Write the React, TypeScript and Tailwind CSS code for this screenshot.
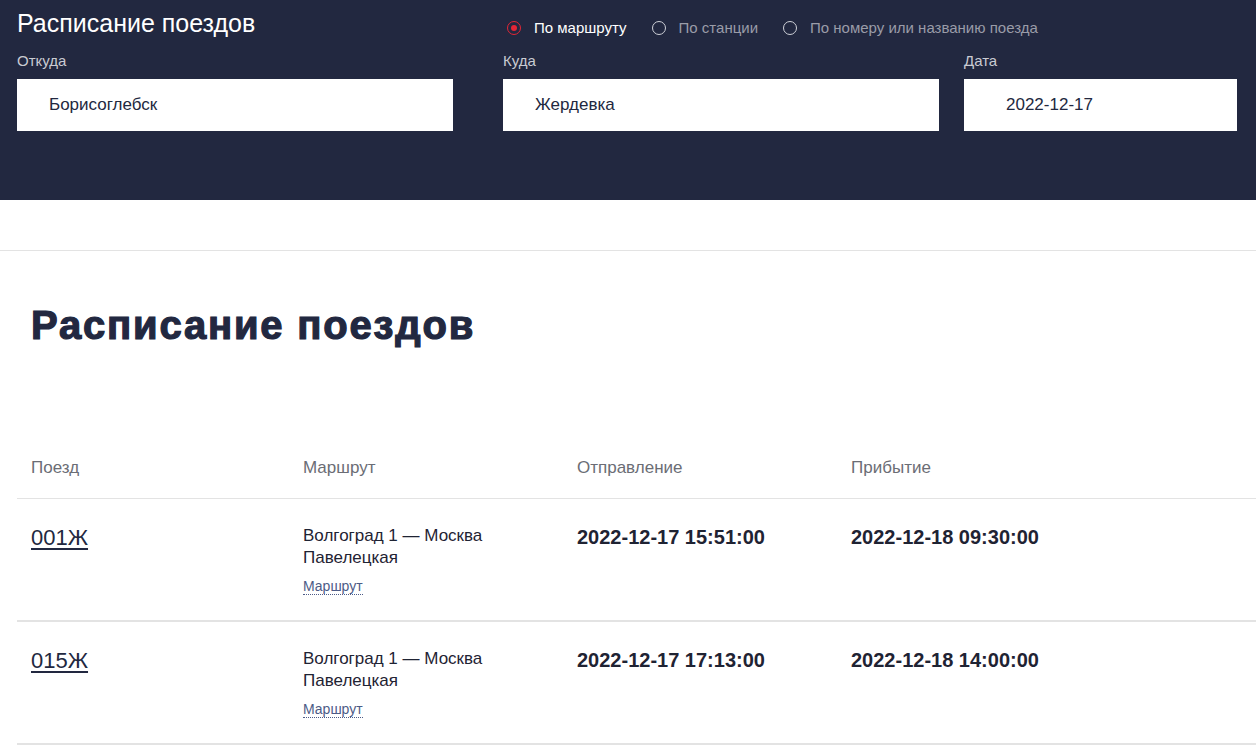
import { useState } from "react";

type Train = {
  number: string;
  route: string;
  departure: string;
  arrival: string;
};

const trains: Train[] = [
  {
    number: "001Ж",
    route: "Волгоград 1 — Москва Павелецкая",
    departure: "2022-12-17 15:51:00",
    arrival: "2022-12-18 09:30:00",
  },
  {
    number: "015Ж",
    route: "Волгоград 1 — Москва Павелецкая",
    departure: "2022-12-17 17:13:00",
    arrival: "2022-12-18 14:00:00",
  },
];

const modes = ["По маршруту", "По станции", "По номеру или названию поезда"];

function Radio({ label, active, onClick }: { label: string; active: boolean; onClick: () => void }) {
  return (
    <button onClick={onClick} className="flex items-center gap-[13px]">
      <span
        className={
          active
            ? "w-[14px] h-[14px] rounded-full border-[1.5px] border-[#e32636] flex items-center justify-center"
            : "w-[14px] h-[14px] rounded-full border-[1.5px] border-[#cfd1d8]"
        }
      >
        {active && <span className="w-[6px] h-[6px] rounded-full bg-[#e32636]" />}
      </span>
      <span className={active ? "text-[15px] text-white" : "text-[15px] text-[#9a9ca8]"}>{label}</span>
    </button>
  );
}

export default function App() {
  const [mode, setMode] = useState(0);

  return (
    <div className="min-h-screen bg-white font-['Liberation_Sans',Arial,sans-serif] text-[#222840]">
      {/* Search panel */}
      <header className="h-[200px] bg-[#222840] px-[17px]">
        <div className="flex items-start">
          <h1 className="w-[490px] pt-[8px] text-[25px] leading-[30px] text-white">Расписание поездов</h1>
          <div className="mt-[13px] h-[30px] flex items-center gap-[25px]">
            {modes.map((m, i) => (
              <Radio key={m} label={m} active={mode === i} onClick={() => setMode(i)} />
            ))}
          </div>
        </div>

        <div className="mt-[8px] flex">
          <label className="w-[436px] flex flex-col gap-[8px]">
            <span className="text-[15px] leading-[20px] text-[#c9cbd2]">Откуда</span>
            <input
              defaultValue="Борисоглебск"
              className="h-[52px] bg-white pl-[32px] text-[17px] text-[#222840] outline-none"
            />
          </label>
          <label className="ml-[50px] w-[436px] flex flex-col gap-[8px]">
            <span className="text-[15px] leading-[20px] text-[#c9cbd2]">Куда</span>
            <input
              defaultValue="Жердевка"
              className="h-[52px] bg-white pl-[32px] text-[17px] text-[#222840] outline-none"
            />
          </label>
          <label className="ml-[25px] w-[273px] flex flex-col gap-[8px]">
            <span className="text-[15px] leading-[20px] text-[#c9cbd2]">Дата</span>
            <input
              defaultValue="2022-12-17"
              className="h-[52px] bg-white pl-[42px] text-[17px] text-[#222840] outline-none"
            />
          </label>
        </div>
      </header>

      <div className="h-[51px] border-b border-[#e3e3e3]" />

      <main className="pl-[17px]">
        <h2 className="ml-[14px] mt-[52px] text-[40px] leading-[44px] font-bold tracking-[1.8px] [-webkit-text-stroke:1.2px_#222840]">
          Расписание поездов
        </h2>

        {/* Results table */}
        <div className="mt-[109px]">
          <div className="grid grid-cols-[272px_274px_274px_1fr] border-b border-[#e3e3e3] pb-[18px] text-[17px] leading-[24px] text-[#6b6d75]">
            <div className="pl-[14px]">Поезд</div>
            <div className="pl-[14px]">Маршрут</div>
            <div className="pl-[14px]">Отправление</div>
            <div className="pl-[14px]">Прибытие</div>
          </div>

          {trains.map((t) => (
            <div
              key={t.number}
              className="grid grid-cols-[272px_274px_274px_1fr] h-[123px] border-b-2 border-[#e3e3e3] pt-[22px]"
            >
              <div className="pl-[14px] pt-[3px]">
                <a href="#" className="text-[22px] leading-[28px] underline underline-offset-[3px]">
                  {t.number}
                </a>
              </div>
              <div className="pl-[14px] pr-[30px] pt-[4px]">
                <p className="text-[17px] leading-[22px] text-[#1f2333]">{t.route}</p>
                <a
                  href="#"
                  className="mt-[9px] inline-block text-[14px] leading-[16px] text-[#4d5b86] border-b border-dotted border-[#4d5b86]"
                >
                  Маршрут
                </a>
              </div>
              <div className="pl-[14px] pt-[2px] text-[20px] leading-[28px] font-bold text-[#1f2333]">{t.departure}</div>
              <div className="pl-[14px] pt-[2px] text-[20px] leading-[28px] font-bold text-[#1f2333]">{t.arrival}</div>
            </div>
          ))}
        </div>
      </main>
    </div>
  );
}
